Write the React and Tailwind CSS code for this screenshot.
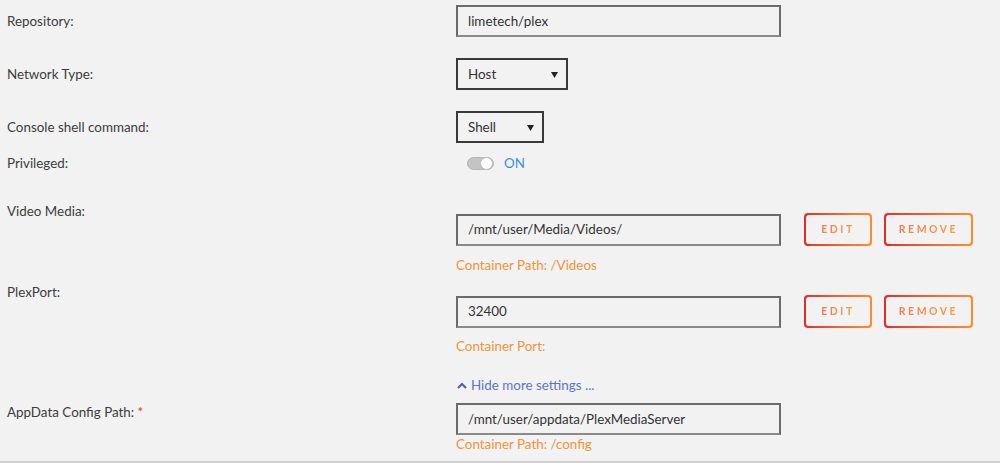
import React from 'react'

const font = { fontFamily: 'Lato, "Noto Sans", sans-serif' }

const Label = ({ children, className = '' }) => (
  <div className={`w-[456px] shrink-0 pl-[7px] text-[13.4px] leading-[18px] text-[#3c3c3c] ${className}`}>
    {children}
  </div>
)

const TextBox = ({ value }) => (
  <div className="flex h-[32px] w-[325px] items-center border-2 border-[#6b6b6b] border-b-[#8a8a8a] bg-[#f2f2f2] px-[10px] text-[13.4px] text-[#333]">
    {value}
  </div>
)

const Select = ({ value, width }) => (
  <div className={`flex h-[32px] ${width} items-center justify-between border-2 border-[#3a3a3a] pl-[10px] pr-[8px] text-[13.4px] text-[#333]`}>
    <span>{value}</span>
    <svg width="7" height="7" viewBox="0 0 7 7">
      <path d="M0 1h7L3.5 7z" fill="#222" />
    </svg>
  </div>
)

const GradButton = ({ label, width }) => (
  <div className={`${width} h-[33px] rounded-[4px] bg-gradient-to-r from-[#e22b2b] to-[#ff8c2f] p-[2px]`}>
    <div className="flex h-full w-full items-center justify-center rounded-[3px] bg-[#f2f2f2]">
      <span className="bg-gradient-to-r from-[#f57b4e] to-[#ff9a3c] bg-clip-text text-[10.5px] font-bold tracking-[2.5px] text-transparent">
        {label}
      </span>
    </div>
  </div>
)

const Hint = ({ children, className = '' }) => (
  <div className={`text-[13.4px] leading-[18px] text-[#f0943a] ${className}`}>{children}</div>
)

export default function App() {
  return (
    <div className="h-[463px] w-[1000px] overflow-hidden bg-[#f2f2f2]" style={font}>
      <div className="flex items-center pt-[5px]">
        <Label>Repository:</Label>
        <TextBox value="limetech/plex" />
      </div>

      <div className="mt-[21px] flex items-center">
        <Label>Network Type:</Label>
        <Select value="Host" width="w-[112px]" />
      </div>

      <div className="mt-[21px] flex items-center">
        <Label>Console shell command:</Label>
        <Select value="Shell" width="w-[88px]" />
      </div>

      <div className="mt-[11px] flex h-[18px] items-center">
        <Label>Privileged:</Label>
        <div className="ml-[11px] flex items-center gap-[10px]">
          <div className="relative h-[13px] w-[27px] rounded-full border border-[#b5b5b5] bg-[#c4c4c4]">
            <div className="absolute right-0 top-[-1px] h-[13px] w-[13px] rounded-full border border-[#bbb] bg-white" />
          </div>
          <span className="text-[13.4px] text-[#3b8ed8]">ON</span>
        </div>
      </div>

      <div className="mt-[30px] flex items-start">
        <Label>Video Media:</Label>
        <div className="pt-[11px]">
          <div className="flex items-center">
            <TextBox value="/mnt/user/Media/Videos/" />
            <div className="ml-[23px] flex gap-[12px]">
              <GradButton label="EDIT" width="w-[68px]" />
              <GradButton label="REMOVE" width="w-[89px]" />
            </div>
          </div>
          <Hint className="mt-[10px]">Container Path: /Videos</Hint>
        </div>
      </div>

      <div className="mt-[9px] flex items-start">
        <Label>PlexPort:</Label>
        <div className="pt-[12px]">
          <div className="flex items-center">
            <TextBox value="32400" />
            <div className="ml-[23px] flex gap-[12px]">
              <GradButton label="EDIT" width="w-[68px]" />
              <GradButton label="REMOVE" width="w-[89px]" />
            </div>
          </div>
          <Hint className="mt-[9px]">Container Port:</Hint>
        </div>
      </div>

      <div className="mt-[21px] flex h-[18px] items-center pl-[457px] text-[13.4px] text-[#5b76c2]">
        <svg width="10" height="7" viewBox="0 0 10 7" className="mr-[4px]">
          <path d="M1 6l4-4 4 4" fill="none" stroke="#4766b8" strokeWidth="2.2" />
        </svg>
        Hide more settings ...
      </div>

      <div className="mt-[9px] flex items-start">
        <Label>
          AppData Config Path: <span className="text-[#e8402f]">*</span>
        </Label>
        <div>
          <TextBox value="/mnt/user/appdata/PlexMediaServer" />
          <Hint>Container Path: /config</Hint>
        </div>
      </div>

      <div className="mt-[8px] border-t-2 border-[#d0d0d0]" />
    </div>
  )
}
